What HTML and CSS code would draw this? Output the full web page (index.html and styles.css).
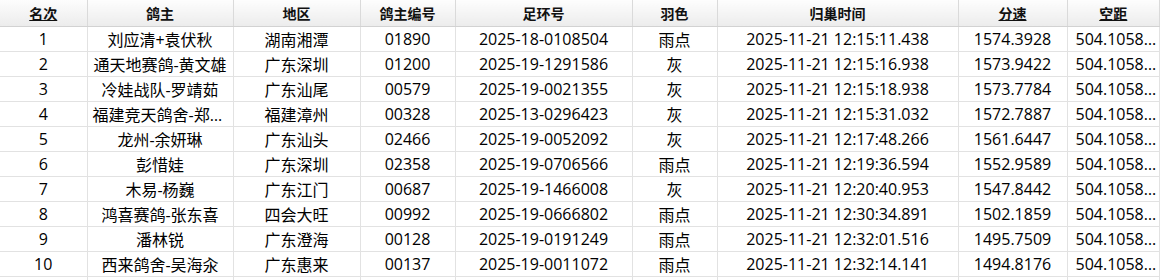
FILE: index.html
```html
<!DOCTYPE html>
<html lang="zh-CN">
  <head>
    <meta charset="UTF-8" />
    <title>归巢成绩</title>
    <link rel="stylesheet" href="styles.css">
  </head>
  <body>
    <table class="grid">
      <colgroup>
        <col style="width: 87px" />
        <col style="width: 146px" />
        <col style="width: 127px" />
        <col style="width: 95px" />
        <col style="width: 177px" />
        <col style="width: 85px" />
        <col style="width: 241px" />
        <col style="width: 109px" />
        <col />
      </colgroup>
      <thead>
        <tr>
          <th class="sort">名次</th>
          <th>鸽主</th>
          <th>地区</th>
          <th>鸽主编号</th>
          <th>足环号</th>
          <th>羽色</th>
          <th>归巢时间</th>
          <th class="sort">分速</th>
          <th class="sort">空距</th>
        </tr>
      </thead>
      <tbody>
        <tr><td>1</td><td>刘应清+袁伏秋</td><td>湖南湘潭</td><td>01890</td><td>2025-18-0108504</td><td>雨点</td><td>2025-11-21 12:15:11.438</td><td>1574.3928</td><td class="last">504.105812</td></tr>
        <tr><td>2</td><td>通天地赛鸽-黄文雄</td><td>广东深圳</td><td>01200</td><td>2025-19-1291586</td><td>灰</td><td>2025-11-21 12:15:16.938</td><td>1573.9422</td><td class="last">504.105812</td></tr>
        <tr><td>3</td><td>冷娃战队-罗靖茹</td><td>广东汕尾</td><td>00579</td><td>2025-19-0021355</td><td>灰</td><td>2025-11-21 12:15:18.938</td><td>1573.7784</td><td class="last">504.105812</td></tr>
        <tr><td>4</td><td>福建竞天鸽舍-郑明辉</td><td>福建漳州</td><td>00328</td><td>2025-13-0296423</td><td>灰</td><td>2025-11-21 12:15:31.032</td><td>1572.7887</td><td class="last">504.105812</td></tr>
        <tr><td>5</td><td>龙州-余妍琳</td><td>广东汕头</td><td>02466</td><td>2025-19-0052092</td><td>灰</td><td>2025-11-21 12:17:48.266</td><td>1561.6447</td><td class="last">504.105812</td></tr>
        <tr><td>6</td><td>彭惜娃</td><td>广东深圳</td><td>02358</td><td>2025-19-0706566</td><td>雨点</td><td>2025-11-21 12:19:36.594</td><td>1552.9589</td><td class="last">504.105812</td></tr>
        <tr><td>7</td><td>木易-杨巍</td><td>广东江门</td><td>00687</td><td>2025-19-1466008</td><td>灰</td><td>2025-11-21 12:20:40.953</td><td>1547.8442</td><td class="last">504.105812</td></tr>
        <tr><td>8</td><td>鸿喜赛鸽-张东喜</td><td>四会大旺</td><td>00992</td><td>2025-19-0666802</td><td>雨点</td><td>2025-11-21 12:30:34.891</td><td>1502.1859</td><td class="last">504.105812</td></tr>
        <tr><td>9</td><td>潘林锐</td><td>广东澄海</td><td>00128</td><td>2025-19-0191249</td><td>雨点</td><td>2025-11-21 12:32:01.516</td><td>1495.7509</td><td class="last">504.105812</td></tr>
        <tr><td>10</td><td>西来鸽舍-吴海汆</td><td>广东惠来</td><td>00137</td><td>2025-19-0011072</td><td>雨点</td><td>2025-11-21 12:32:14.141</td><td>1494.8176</td><td class="last">504.105812</td></tr>
        <tr><td></td><td></td><td></td><td></td><td></td><td></td><td></td><td></td><td></td></tr>
      </tbody>
    </table>
  </body>
</html>
```

FILE: styles.css
```css
html {
  font-family: "Open Sans", "Noto Sans CJK SC", sans-serif;
  color: #000;
}
body {
  margin: 0;
  background: #fff;
}
.grid {
  width: 1160px;
  border-collapse: collapse;
  table-layout: fixed;
}
.grid th {
  height: 26px;
  padding: 0 5px;
  font-size: 14px;
  font-weight: bold;
  color: #111;
  background: linear-gradient(#fdfdfd, #ececec);
  border-right: 1px solid #dadada;
  border-bottom: 1px solid #d2d2d2;
  white-space: nowrap;
  overflow: hidden;
}
.grid th.sort {
  text-decoration: underline;
}
.grid td {
  height: 24px;
  padding: 0 5px;
  font-size: 16px;
  text-align: center;
  border-right: 1px solid #e2e2e2;
  border-bottom: 1px solid #e2e2e2;
  white-space: nowrap;
  overflow: hidden;
  text-overflow: ellipsis;
}
.grid td.last {
  text-align: left;
  padding: 0 0 0 8px;
}
```
